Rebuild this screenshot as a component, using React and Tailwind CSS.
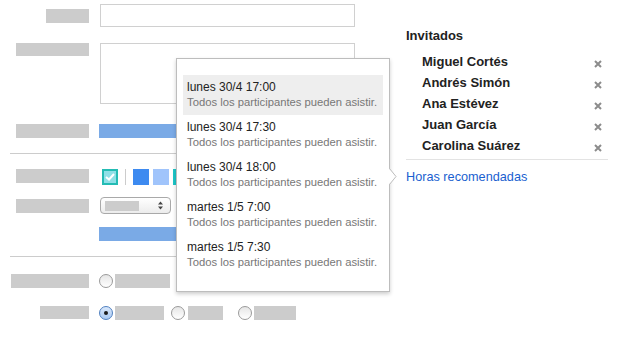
import React from 'react';

const slots = [
  { label: 'lunes 30/4 17:00', active: true },
  { label: 'lunes 30/4 17:30' },
  { label: 'lunes 30/4 18:00' },
  { label: 'martes 1/5 7:00' },
  { label: 'martes 1/5 7:30' },
];

const guests = ['Miguel Cortés', 'Andrés Simón', 'Ana Estévez', 'Juan García', 'Carolina Suárez'];

function Label({ w, h = 'h-[14px]' }) {
  return (
    <div className="w-[89px] flex justify-end shrink-0">
      <div className={`${w} ${h} bg-[#cccccc]`} />
    </div>
  );
}

function Radio({ checked }) {
  if (checked) {
    return (
      <span className="w-[14px] h-[14px] rounded-full border border-[#4f7fc0] bg-gradient-to-b from-[#d9e8fb] to-[#a9c9f2] flex items-center justify-center shrink-0">
        <span className="block w-[4px] h-[4px] rounded-full bg-[#1b1b1b]" />
      </span>
    );
  }
  return (
    <span className="block w-[14px] h-[14px] rounded-full border border-[#9a9a9a] bg-gradient-to-b from-[#e6e6e6] to-white shrink-0" />
  );
}

function App() {
  return (
    <div className="w-[620px] h-[340px] bg-white overflow-hidden flex font-['Liberation_Sans',Arial,sans-serif]">
      <div className="relative w-[390px] shrink-0 flex flex-col">
        <div className="flex items-center mt-[4px] h-[23px]">
          <Label w="w-[43px]" />
          <div className="ml-[11px] w-[255px] h-[23px] border border-[#d0d0d0]" />
        </div>

        <div className="flex items-start mt-[16px]">
          <Label w="w-[73px]" h="h-[13px]" />
          <div className="ml-[11px] w-[255px] h-[61px] border border-[#d0d0d0]" />
        </div>

        <div className="flex items-center mt-[20px] h-[14px]">
          <Label w="w-[73px]" />
          <div className="ml-[10px] w-[256px] h-[14px] bg-[#7aaae6]" />
        </div>

        <div className="mt-[15px] ml-[10px] w-[370px] h-px bg-[#cccccc]" />

        <div className="flex items-start mt-[15px] h-[16px]">
          <Label w="w-[73px]" />
          <div className="ml-[13px] w-[16px] h-[16px] border-2 border-[#24bcb4] bg-[#8fe0e7] flex items-center justify-center">
            <svg width="10" height="8" viewBox="0 0 10 8">
              <path d="M1 4 L4 6.5 L9 1" fill="none" stroke="white" strokeWidth="2" />
            </svg>
          </div>
          <div className="ml-[7px] w-px h-[16px] bg-[#cccccc]" />
          <div className="ml-[7px] w-[16px] h-[16px] bg-[#3d8af0]" />
          <div className="ml-[4px] w-[16px] h-[16px] bg-[#a0c4fb]" />
          <div className="ml-[4px] w-[16px] h-[16px] bg-[#1cc6c8]" />
        </div>

        <div className="flex items-center mt-[12px] h-[17px]">
          <Label w="w-[73px]" />
          <div className="ml-[11px] w-[71px] h-[17px] rounded-[4px] border border-[#a9a9a9] bg-gradient-to-b from-white to-[#ececec] flex items-center">
            <div className="ml-[4px] w-[34px] h-[10px] bg-[#cccccc]" />
            <svg className="ml-auto mr-[7px]" width="5" height="9" viewBox="0 0 5 9">
              <path d="M0 3.5 L2.5 0.5 L5 3.5 Z M0 5.5 L2.5 8.5 L5 5.5 Z" fill="#444" />
            </svg>
          </div>
        </div>

        <div className="mt-[13px] ml-[99px] w-[256px] h-[14px] bg-[#7aaae6]" />

        <div className="mt-[15px] ml-[10px] w-[370px] h-px bg-[#cccccc]" />

        <div className="flex items-center mt-[16px] h-[15px]">
          <Label w="w-[78px]" />
          <div className="ml-[10px] flex items-center">
            <Radio />
            <div className="ml-[2px] w-[55px] h-[14px] bg-[#cccccc]" />
          </div>
        </div>

        <div className="flex items-center mt-[17px] h-[15px]">
          <Label w="w-[49px]" h="h-[13px]" />
          <div className="ml-[10px] flex items-center">
            <Radio checked />
            <div className="ml-[2px] w-[49px] h-[14px] bg-[#cccccc]" />
            <div className="ml-[7px]"><Radio /></div>
            <div className="ml-[3px] w-[35px] h-[14px] bg-[#cccccc]" />
            <div className="ml-[15px]"><Radio /></div>
            <div className="ml-[2px] w-[42px] h-[14px] bg-[#cccccc]" />
          </div>
        </div>

        <div className="absolute left-[176px] top-[58px] w-[214px] bg-white border border-[#bdbdbd] shadow-[0_2px_4px_rgba(0,0,0,0.2)] px-[6px] py-[16px]">
          {slots.map((s) => (
            <div key={s.label} className={`h-[40px] py-[5px] pl-[4px] ${s.active ? 'bg-[#eeeeee]' : ''}`}>
              <div className="text-[12px] leading-[15px] text-[#222222]">{s.label}</div>
              <div className="text-[11.25px] leading-[15px] text-[#777777] whitespace-nowrap">Todos los participantes pueden asistir.</div>
            </div>
          ))}
          <svg className="absolute right-[-8px] top-[109px]" width="8" height="17" viewBox="0 0 8 17">
            <path d="M0 0.5 L7 8.5 L0 16.5 Z" fill="white" />
            <path d="M0.5 0.5 L7 8.5 L0.5 16.5" fill="none" stroke="#bdbdbd" strokeWidth="1" />
          </svg>
        </div>
      </div>

      <div className="ml-[16px] w-[202px] flex flex-col">
        <div className="mt-[28px] text-[13px] leading-[16px] font-bold text-[#222222]">Invitados</div>
        <div className="mt-[7px]">
          {guests.map((g) => (
            <div key={g} className="flex items-start h-[21px] pl-[16px] pr-[6px]">
              <span className="text-[13px] leading-[21px] font-bold text-[#222222]">{g}</span>
              <svg className="ml-auto mt-[9px]" width="8" height="8" viewBox="0 0 8 8">
                <path d="M1 1 L7 7 M7 1 L1 7" stroke="#8c8c8c" strokeWidth="2" />
              </svg>
            </div>
          ))}
        </div>
        <div className="mt-[3px] h-px bg-[#e3e3e3]" />
        <div className="mt-[9px] text-[12.7px] leading-[16px] text-[#1a5fd0]">Horas recomendadas</div>
      </div>
    </div>
  );
}

export default App;
